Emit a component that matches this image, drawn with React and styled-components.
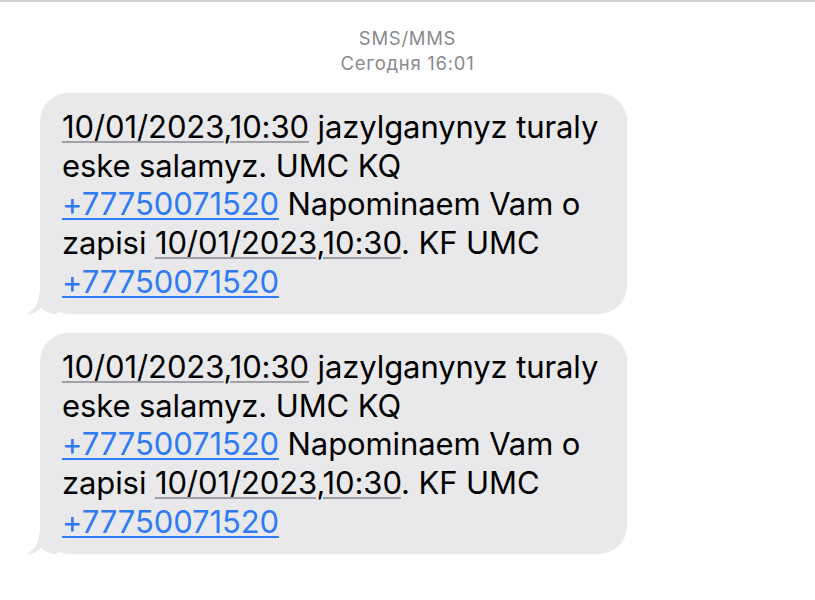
import React from 'react';
import styled, { createGlobalStyle } from 'styled-components';

const GlobalStyle = createGlobalStyle`
    html, body {
        margin: 0;
        padding: 0;
        background: #ffffff;
    }
    body {
        font-family: Inter, "Liberation Sans", "Noto Sans", sans-serif;
    }
`;

const Screen = styled.div`
    width: 815px;
    height: 600px;
    box-sizing: border-box;
    border-top: 2px solid #cfcfd1;
    display: flex;
    flex-direction: column;
    overflow: hidden;
`;

const Header = styled.div`
    display: flex;
    flex-direction: column;
    align-items: center;
    padding-top: 24px;
    color: #8a8a8e;
    font-size: 18.5px;
    line-height: 25px;
    letter-spacing: 0.7px;
`;

const Thread = styled.div`
    display: flex;
    flex-direction: column;
    gap: 19px;
    padding: 17px 0 0 40px;
`;

const Bubble = styled.div`
    position: relative;
    width: 587px;
    height: 221px;
    box-sizing: border-box;
    padding: 15px 0 0 22px;
    background: #e9e9eb;
    border-radius: 28px;
    color: #000;
    font-size: 31px;
    line-height: 38.7px;
    letter-spacing: -0.1px;
    white-space: nowrap;
`;

const Tail = styled.svg`
    position: absolute;
    left: -13px;
    bottom: 0;
`;

const DateLink = styled.span`
    text-decoration: underline;
    text-decoration-color: #a0a0a4;
    text-decoration-thickness: 2px;
    text-underline-offset: 3px;
`;

const PhoneLink = styled.span`
    color: #2f7bf5;
    text-decoration: underline;
    text-decoration-thickness: 2px;
    text-underline-offset: 3px;
`;

const Message = () => (
    <Bubble>
        <Tail width="30" height="26" viewBox="0 0 30 26">
            <path d="M13 0 L30 0 L30 26 C24 26 18 24 14 20 C10 24 5 26 0 26 C8 22 12 14 13 0 Z" fill="#e9e9eb" />
        </Tail>
        <DateLink>10/01/2023,10:30</DateLink> jazylganynyz turaly
        <br />
        eske salamyz. UMC KQ
        <br />
        <PhoneLink>+77750071520</PhoneLink> Napominaem Vam o
        <br />
        zapisi <DateLink>10/01/2023,10:30</DateLink>. KF UMC
        <br />
        <PhoneLink>+77750071520</PhoneLink>
    </Bubble>
);

const App = () => (
    <Screen>
        <GlobalStyle />
        <Header>
            <div>SMS/MMS</div>
            <div>Сегодня 16:01</div>
        </Header>
        <Thread>
            <Message />
            <Message />
        </Thread>
    </Screen>
);

export default App;
